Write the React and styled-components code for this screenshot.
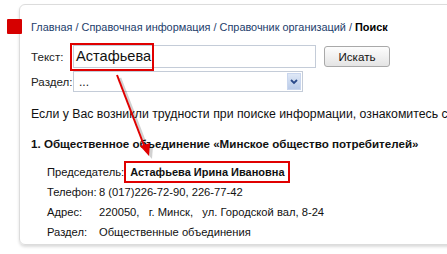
import React from 'react';
import styled, { createGlobalStyle } from 'styled-components';

const GlobalStyle = createGlobalStyle`
  html, body {
    margin: 0;
    padding: 0;
    background: #fff;
    overflow: hidden;
  }
  body {
    font-family: 'Liberation Sans', Arial, sans-serif;
    color: #111;
  }
`;

const Page = styled.div`
  position: relative;
  width: 447px;
  height: 254px;
  overflow: hidden;
  padding: 4px 0 0 19px;
  box-sizing: border-box;
`;

const Marker = styled.div`
  position: absolute;
  left: 7px;
  top: 19px;
  width: 15px;
  height: 15px;
  background: #d60000;
  border-radius: 1px;
`;

const Card = styled.div`
  width: 470px;
  height: 241px;
  box-sizing: border-box;
  border: 1px solid #dcdcdc;
  border-radius: 6px;
  box-shadow: 0 2px 3px rgba(0, 0, 0, 0.14);
  padding: 14px 0 0 11px;
`;

const Crumbs = styled.div`
  font-size: 10.9px;
  line-height: 16px;
  color: #1c3d6b;
  white-space: nowrap;
  b {
    color: #000;
  }
`;

const FormRow = styled.div`
  display: flex;
  align-items: center;
  margin-top: ${(p) => p.$top}px;
`;

const Label = styled.div`
  width: 42px;
  font-size: 11.6px;
  color: #222;
`;

const Field = styled.div`
  position: relative;
  width: 243px;
  height: 23px;
  box-sizing: border-box;
  border: 1px solid #c4ccd8;
  font-size: 14.6px;
  line-height: 21px;
  padding-left: 2px;
`;

const Mark = styled.span`
  position: absolute;
  left: -4px;
  top: -3px;
  width: 80px;
  height: 24px;
  border: 2px solid #e00000;
`;

const Button = styled.button`
  margin-left: 8px;
  width: 66px;
  height: 21px;
  border: 1px solid #a9a9a9;
  border-radius: 3px;
  background: linear-gradient(#fdfdfd, #e4e4e4);
  font-family: 'Liberation Sans', Arial, sans-serif;
  font-size: 11.6px;
  color: #111;
  padding: 0;
`;

const Select = styled.div`
  display: flex;
  align-items: center;
  justify-content: space-between;
  width: 230px;
  height: 21px;
  box-sizing: border-box;
  border: 1px solid #c4ccd8;
  padding: 0 1px 0 5px;
  font-size: 12px;
  color: #222;
`;

const SelectArrow = styled.div`
  width: 14px;
  height: 17px;
  background: linear-gradient(#dfe8f6, #b9cbe9);
  border: 1px solid #c9d6ee;
  box-sizing: border-box;
  display: flex;
  align-items: center;
  justify-content: center;
`;

const Notice = styled.div`
  margin-top: 14px;
  font-size: 12.3px;
  line-height: 16px;
  white-space: nowrap;
  color: #111;
`;

const Title = styled.div`
  margin-top: 14px;
  font-size: 11.6px;
  font-weight: bold;
  line-height: 16px;
  white-space: nowrap;
  color: #111;
`;

const Details = styled.div`
  margin-top: 10px;
  padding-left: 16px;
`;

const Row = styled.div`
  display: flex;
  align-items: center;
  height: 20px;
  font-size: 11.2px;
  white-space: nowrap;
  color: #111;
`;

const Key = styled.span`
  width: 52px;
  flex-shrink: 0;
`;

const Boxed = styled.span`
  display: inline-block;
  border: 2px solid #e00000;
  padding: 3px 3px 3px 4px;
  font-weight: bold;
  font-size: 11px;
`;

const Arrow = styled.svg`
  position: absolute;
  left: 0;
  top: 0;
  pointer-events: none;
`;

export default function App() {
  return (
    <Page>
      <GlobalStyle />
      <Marker />
      <Card>
        <Crumbs>
          Главная / Справочная информация / Справочник организаций / <b>Поиск</b>
        </Crumbs>

        <FormRow $top={10}>
          <Label>Текст:</Label>
          <Field>
            <Mark />
            Астафьева
          </Field>
          <Button>Искать</Button>
        </FormRow>

        <FormRow $top={3}>
          <Label>Раздел:</Label>
          <Select>
            <span>...</span>
            <SelectArrow>
              <svg width="8" height="6" viewBox="0 0 8 6">
                <path d="M1 1 L4 4 L7 1" fill="none" stroke="#2a4a8a" strokeWidth="1.8" />
              </svg>
            </SelectArrow>
          </Select>
        </FormRow>

        <Notice>Если у Вас возникли трудности при поиске информации, ознакомитесь с</Notice>

        <Title>1. Общественное объединение «Минское общество потребителей»</Title>

        <Details>
          <Row>
            <span>Председатель:</span>
            <Boxed>Астафьева Ирина Ивановна</Boxed>
          </Row>
          <Row>
            <Key>Телефон:</Key>
            <span>8 (017)226-72-90, 226-77-42</span>
          </Row>
          <Row>
            <Key>Адрес:</Key>
            <span>220050,&nbsp;&nbsp; г. Минск,&nbsp;&nbsp; ул. Городской вал, 8-24</span>
          </Row>
          <Row>
            <Key>Раздел:</Key>
            <span>Общественные объединения</span>
          </Row>
        </Details>
      </Card>

      <Arrow width="447" height="254" viewBox="0 0 447 254">
        <line x1="118" y1="76" x2="146" y2="148" stroke="rgba(0,0,0,0.18)" strokeWidth="2.5" transform="translate(2 2)" />
        <polygon points="150,157 141,147 151,144" fill="rgba(0,0,0,0.18)" transform="translate(2 2)" />
        <line x1="117" y1="75" x2="145" y2="148" stroke="#e00000" strokeWidth="2" />
        <polygon points="149,156 140,146 150,143" fill="#e00000" />
      </Arrow>
    </Page>
  );
}
